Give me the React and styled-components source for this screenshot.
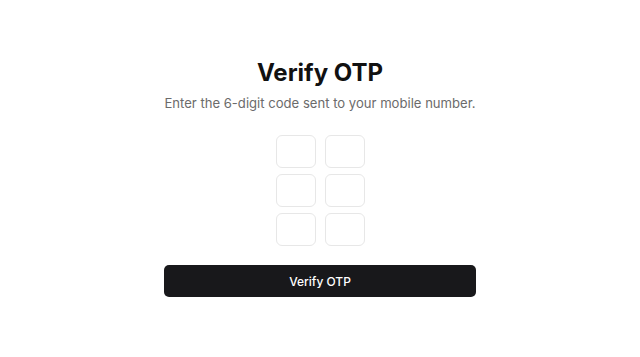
import React from 'react';
import styled, { createGlobalStyle } from 'styled-components';

const GlobalStyle = createGlobalStyle`
  body {
    margin: 0;
    background: #fff;
    font-family: Inter, "Liberation Sans", sans-serif;
  }
`;

const Page = styled.div`
  display: flex;
  flex-direction: column;
  align-items: center;
  padding-top: 57px;
`;

const Card = styled.div`
  width: 312px;
  display: flex;
  flex-direction: column;
  align-items: center;
`;

const Title = styled.h1`
  margin: 0;
  font-size: 24px;
  line-height: 32px;
  font-weight: 700;
  color: #111;
`;

const Subtitle = styled.p`
  margin: 4px 0 0;
  font-size: 13.1px;
  line-height: 20px;
  color: #6b6b6b;
  white-space: nowrap;
`;

const Grid = styled.div`
  margin-top: 22px;
  display: grid;
  grid-template-columns: repeat(2, 40px);
  grid-auto-rows: 33px;
  column-gap: 9px;
  row-gap: 6px;
`;

const Digit = styled.input`
  box-sizing: border-box;
  width: 40px;
  height: 33px;
  border: 1px solid #e7e7e7;
  border-radius: 6px;
  background: #fff;
  text-align: center;
  font-size: 14px;
  font-family: inherit;
  outline: none;
`;

const SubmitButton = styled.button`
  margin-top: 19px;
  width: 312px;
  height: 32px;
  border: none;
  border-radius: 5px;
  background: #18181b;
  color: #fff;
  font-family: inherit;
  font-size: 12px;
  font-weight: 500;
  cursor: pointer;
`;

function App() {
  return (
    <Page>
      <GlobalStyle />
      <Card>
        <Title>Verify OTP</Title>
        <Subtitle>Enter the 6-digit code sent to your mobile number.</Subtitle>
        <Grid>
          {[0, 1, 2, 3, 4, 5].map((i) => (
            <Digit key={i} type="text" maxLength={1} />
          ))}
        </Grid>
        <SubmitButton type="submit">Verify OTP</SubmitButton>
      </Card>
    </Page>
  );
}

export default App;
